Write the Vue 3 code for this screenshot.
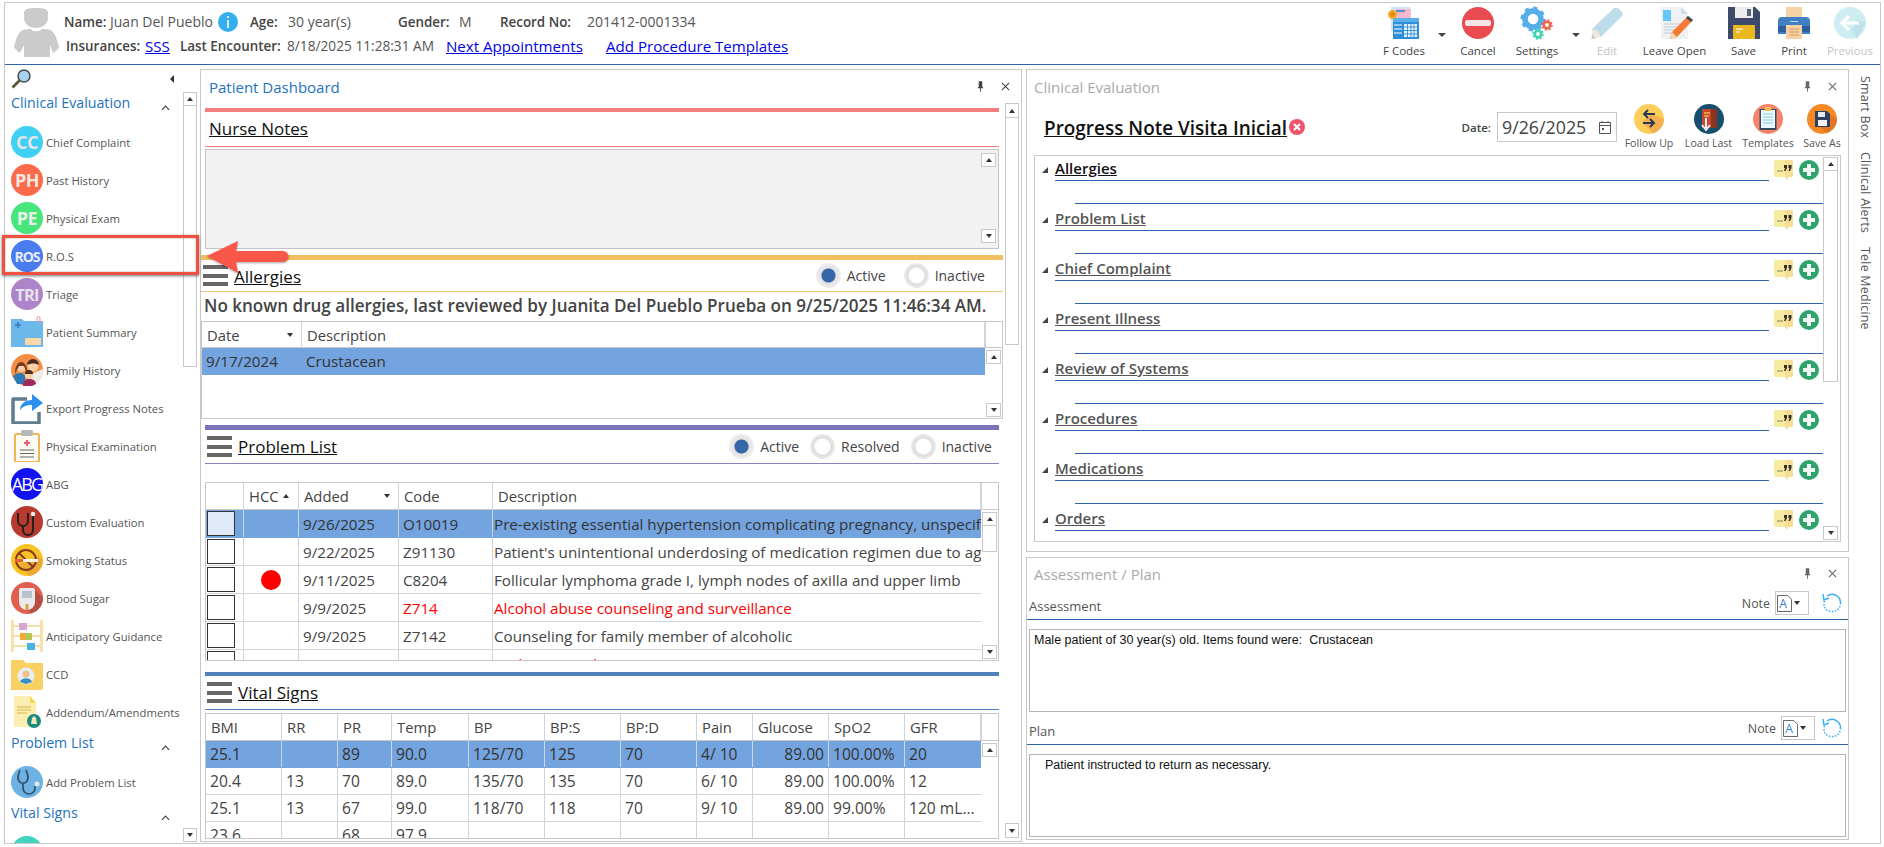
<script setup>
const tools = [
  { k: 'fcodes', label: 'F Codes', w: 60 },
  { k: 'arrow', w: 16 },
  { k: 'cancel', label: 'Cancel', w: 56 },
  { k: 'settings', label: 'Settings', w: 62 },
  { k: 'arrow', w: 16 },
  { k: 'edit', label: 'Edit', w: 46, off: true },
  { k: 'leave', label: 'Leave Open', w: 89 },
  { k: 'save', label: 'Save', w: 49 },
  { k: 'print', label: 'Print', w: 52 },
  { k: 'prev', label: 'Previous', w: 60, off: true },
]
const clinicalItems = [
  { label: 'Chief Complaint', text: 'CC', color: '#3fd0f6', cls: 'f15', ink: '#e6e6e6' },
  { label: 'Past History', text: 'PH', color: '#fb6a4a', cls: 'f15', ink: '#f3e6e0' },
  { label: 'Physical Exam', text: 'PE', color: '#46e67c', cls: 'f15', ink: '#e8f0e8' },
  { label: 'R.O.S', text: 'ROS', color: '#4a7cf0', cls: 'f12', ink: '#e8ecf4' },
  { label: 'Triage', text: 'TRI', color: '#ad84c9', cls: 'f14', ink: '#e8e2ee' },
  { label: 'Patient Summary', k: 'folder' },
  { label: 'Family History', k: 'family' },
  { label: 'Export Progress Notes', k: 'export' },
  { label: 'Physical Examination', k: 'clip' },
  { label: 'ABG', text: 'ABG', color: '#1212f5', cls: 'f16n', ink: '#fff' },
  { label: 'Custom Evaluation', k: 'steth' },
  { label: 'Smoking Status', k: 'smoke' },
  { label: 'Blood Sugar', k: 'sugar' },
  { label: 'Anticipatory Guidance', k: 'abacus' },
  { label: 'CCD', k: 'ccd' },
  { label: 'Addendum/Amendments', k: 'addendum' },
]
const problems = [
  { added: '9/26/2025', code: 'O10019', desc: 'Pre-existing essential hypertension complicating pregnancy, unspecified trimester', sel: true },
  { added: '9/22/2025', code: 'Z91130', desc: "Patient's unintentional underdosing of medication regimen due to age-related debility" },
  { added: '9/11/2025', code: 'C8204', desc: 'Follicular lymphoma grade I, lymph nodes of axilla and upper limb', hcc: true },
  { added: '9/9/2025', code: 'Z714', desc: 'Alcohol abuse counseling and surveillance', red: true },
  { added: '9/9/2025', code: 'Z7142', desc: 'Counseling for family member of alcoholic' },
  { added: '9/9/2025', code: 'Z68', desc: 'Body mass index [BMI]', red: true },
]
const vitalHead = ['BMI', 'RR', 'PR', 'Temp', 'BP', 'BP:S', 'BP:D', 'Pain', 'Glucose', 'SpO2', 'GFR']
const vitals = [
  { sel: true, c: ['25.1', '', '89', '90.0', '125/70', '125', '70', '4/ 10', '89.00', '100.00%', '20'] },
  { c: ['20.4', '13', '70', '89.0', '135/70', '135', '70', '6/ 10', '89.00', '100.00%', '12'] },
  { c: ['25.1', '13', '67', '99.0', '118/70', '118', '70', '9/ 10', '89.00', '99.00%', '120 mL...'] },
  { c: ['23.6', '', '68', '97.9', '', '', '', '', '', '', ''] },
]
const noteActions = [
  { k: 'follow', label: 'Follow Up', w: 60 },
  { k: 'load', label: 'Load Last', w: 59 },
  { k: 'templates', label: 'Templates', w: 60 },
  { k: 'saveas', label: 'Save As', w: 48 },
]
const sections = ['Allergies', 'Problem List', 'Chief Complaint', 'Present Illness', 'Review of Systems', 'Procedures', 'Medications', 'Orders']
const assessmentText = 'Male patient of 30 year(s) old. Items found were:  Crustacean'
</script>

<template>
  <div class="frame">
    <header class="top">
      <svg class="avatar" viewBox="0 0 45 50">
        <path d="M10 6c0-4 4-5 12-5s12 1 12 5v5c0 5-5 10-12 10S10 16 10 11z" fill="#cbcbcb" />
        <path d="M9 23c3-1 6-1 8-1 1 3 9 3 11 0 3 0 6 0 8 1 4 1 7 8 9 17-1 2-3 4-6 6l-3-8v12H10V38l-4 8c-3-2-5-4-6-6 2-9 5-16 9-17z" fill="#cbcbcb" />
      </svg>
      <div class="info">
        <div class="info-row r1">
          <b>Name:</b><span>Juan Del Pueblo</span>
          <svg class="info-i" viewBox="0 0 20 20"><circle cx="10" cy="10" r="10" fill="#35aef0" /><rect x="9" y="8" width="2" height="8" fill="#d8f0fc" /><rect x="9" y="4" width="2" height="2" fill="#d8f0fc" /></svg>
          <b>Age:</b><span>30 year(s)</span>
          <b>Gender:</b><span>M</span>
          <b>Record No:</b><span>201412-0001334</span>
        </div>
        <div class="info-row r2">
          <b>Insurances:</b><a>SSS</a>
          <b>Last Encounter:</b><span>8/18/2025 11:28:31 AM</span>
          <a>Next Appointments</a><a>Add Procedure Templates</a>
        </div>
      </div>
      <div class="toolbar">
        <div v-for="(t, i) in tools" :key="i" class="tool" :class="{ off: t.off }" :style="{ width: t.w + 'px' }">
          <i v-if="t.k === 'arrow'" class="drop"></i>
          <template v-else>
            <svg class="tool-ic" viewBox="0 0 32 32">
              <template v-if="t.k === 'fcodes'">
                <path d="M3 0h19v6H8v18H3z" fill="#cfe3f8" />
                <rect x="8" y="2" width="15" height="9" fill="#f6b9cc" />
                <rect x="8" y="3" width="9" height="2" fill="#5b8fc9" />
                <rect x="5" y="11" width="26" height="21" fill="#2f8fd8" />
                <rect x="5" y="11" width="26" height="4" fill="#58b2e8" />
                <path d="M16 17h13v13H16z" fill="#e8f3fb" />
                <path d="M16 20h13M16 23.5h13M16 27h13M19.5 17v13M23 17v13M26 17v13" stroke="#2f8fd8" stroke-width=".9" />
                <path d="M6 18h8M6 22h8M6 26h8" stroke="#bcdcf4" stroke-width="1.4" />
                <circle cx="4.5" cy="7.5" r="4.5" fill="#f6a623" /><circle cx="4.5" cy="7.5" r="2.3" fill="#e28a10" />
              </template>
              <template v-else-if="t.k === 'cancel'">
                <circle cx="16" cy="16" r="16" fill="#ea4b50" /><rect x="3" y="13" width="26" height="6" rx="2" fill="#f4e6e6" />
              </template>
              <template v-else-if="t.k === 'settings'">
                <circle cx="12" cy="12" r="8" fill="none" stroke="#55aee8" stroke-width="5.5" />
                <circle cx="12" cy="12" r="11" fill="none" stroke="#55aee8" stroke-width="3" stroke-dasharray="4.2 4.4" />
                <circle cx="26" cy="18" r="3.2" fill="none" stroke="#f0654f" stroke-width="2.6" />
                <circle cx="26" cy="18" r="5" fill="none" stroke="#f0654f" stroke-width="1.6" stroke-dasharray="2 1.9" />
                <circle cx="17" cy="27" r="3.2" fill="none" stroke="#3fd2b4" stroke-width="2.6" />
                <circle cx="17" cy="27" r="5" fill="none" stroke="#3fd2b4" stroke-width="1.6" stroke-dasharray="2 1.9" />
              </template>
              <template v-else-if="t.k === 'edit'">
                <path d="M27 1l5 5-1 3L10 30l-8-1-1-7L23 1z" fill="#bcdcea" />
                <path d="M1 22l1 9 8-1-3-6z" fill="#f0e6dc" /><path d="M1 27l-.5 5 4.5-.5z" fill="#c8c8c8" />
              </template>
              <template v-else-if="t.k === 'leave'">
                <path d="M2 0h20l7 7v25H2z" fill="#f0f1f3" /><path d="M22 0l7 7h-7z" fill="#d5dbe3" />
                <rect x="4" y="3" width="8" height="11" fill="#63c6f6" />
                <path d="M5 17h15M5 20h13M5 23h11M5 26h9" stroke="#cfd8e2" stroke-width="1.3" />
                <path d="M29 9l5 4-16 17-7 2 2-7z" fill="#f47a32" /><path d="M29 9l5 4-2 2-5-4z" fill="#3c4a5c" /><path d="M11 32l2-7 5 5z" fill="#f6d7a8" />
              </template>
              <template v-else-if="t.k === 'save'">
                <path d="M0 0h27l5 5v27H0z" fill="#3d4a6b" /><rect x="7" y="0" width="18" height="11" fill="#ececec" /><rect x="19" y="2" width="4" height="7" fill="#5a6478" />
                <rect x="5" y="18" width="22" height="14" fill="#eab71e" /><path d="M8 22h7M8 25h4" stroke="#f9eec4" stroke-width="1.5" />
              </template>
              <template v-else-if="t.k === 'print'">
                <rect x="8" y="0" width="16" height="11" fill="#f7d2a4" /><path d="M0 14a4 4 0 0 1 4-4h24a4 4 0 0 1 4 4v13H0z" fill="#3f7fc2" /><rect x="0" y="19" width="32" height="6" fill="#2d5f9c" />
                <rect x="8" y="18" width="16" height="14" fill="#f7d2a4" /><path d="M11 22h10M11 25h10M11 28h10" stroke="#d69a5c" stroke-width="1" />
                <rect x="12" y="14" width="8" height="1" fill="#bcd8f2" />
              </template>
              <template v-else>
                <circle cx="16" cy="16" r="16" fill="#cdedf2" /><path d="M17 24l6 8 9-16-9-4z" fill="#bfe3ea" /><path d="M8 16h17M15 9l-7 7 7 7" fill="none" stroke="#fff" stroke-width="3.2" />
              </template>
            </svg>
            <span class="tool-lb">{{ t.label }}</span>
          </template>
        </div>
      </div>
    </header>

    <div class="body">
      <aside class="side">
        <div class="side-list">
          <div class="side-top">
            <svg class="lens" viewBox="0 0 20 20"><circle cx="13" cy="7" r="6" fill="#a8d2f4" stroke="#4a4a4a" stroke-width="1.5" /><path d="M8.5 11.5L1.5 18.5" stroke="#5a5a3a" stroke-width="2.8" /></svg>
            <i class="collapse"></i>
          </div>
          <div class="side-h">Clinical Evaluation<svg class="chev" viewBox="0 0 10 6"><path d="M1 5l4-4 4 4" fill="none" stroke="#444" stroke-width="1.3" /></svg></div>
          <div v-for="it in clinicalItems" :key="it.label" class="side-item">
            <span v-if="it.text" class="disc" :class="it.cls" :style="{ background: it.color, color: it.ink }">{{ it.text }}</span>
            <svg v-else class="side-ic" viewBox="0 0 32 32">
              <template v-if="it.k === 'folder'">
                <path d="M0 3h11l2 2h19v26H0z" fill="#6cb8ea" /><rect x="14" y="22" width="16" height="7" fill="#f9d8a8" /><path d="M4 9h6M7 6v6" stroke="#2b79c2" stroke-width="1.5" /><path d="M26 6V2a1.5 1.5 0 0 1 3 0v6" fill="none" stroke="#ef8f8f" stroke-width="1" />
              </template>
              <template v-else-if="it.k === 'family'">
                <circle cx="16" cy="16" r="16" fill="#f68f45" /><path d="M16 32A16 16 0 0 0 32 16V15L20 20z" fill="#f0ece6" />
                <circle cx="22" cy="12" r="5.5" fill="#f9cfa6" /><path d="M16 11a6 6 0 0 1 12 0c-3-2-8-2-12 0z" fill="#4a2c20" />
                <circle cx="10" cy="13" r="5" fill="#f9cfa6" /><path d="M4 20c0-9 3-12 6-12s7 3 6 12l-3-8H8z" fill="#7a3a20" />
                <path d="M2 22c4-4 10-4 12 0v8H6z" fill="#2a7ab8" /><circle cx="18" cy="21" r="4" fill="#f9cfa6" /><path d="M14 20a4 4 0 0 1 8 0z" fill="#4a2c20" /><path d="M12 32c0-6 3-7 6-7s7 1 7 5l-4 2z" fill="#a02a5c" />
              </template>
              <template v-else-if="it.k === 'export'">
                <path d="M16 7H2v24h26V20" fill="none" stroke="#5e7e90" stroke-width="3.5" stroke-linejoin="round" />
                <path d="M9 18c0-6 5-10 12-10V2l11 9-11 8v-6c-5 0-9 1-12 5z" fill="#2b90ee" />
              </template>
              <template v-else-if="it.k === 'clip'">
                <rect x="4" y="4" width="24" height="28" rx="1.5" fill="#fbfbf4" stroke="#f2b455" stroke-width="2" />
                <rect x="10" y="0" width="12" height="6" rx="2" fill="#b8b8b8" /><path d="M16 10v6M13 13h6" stroke="#ef5e68" stroke-width="2" /><path d="M9 20h14M9 23.5h14M9 27h14" stroke="#666" stroke-width="1" />
              </template>
              <template v-else-if="it.k === 'steth'">
                <circle cx="16" cy="16" r="16" fill="#b83a2e" />
                <path d="M7 7v8a5 5 0 0 0 10 0V7M12 20v4a5 5 0 0 0 10 0V10" fill="none" stroke="#23201e" stroke-width="2" /><circle cx="22" cy="8" r="2.2" fill="#eee" />
              </template>
              <template v-else-if="it.k === 'smoke'">
                <circle cx="16" cy="16" r="16" fill="#f8c326" /><path d="M32 16A16 16 0 0 1 18 32L9 20l18-8z" fill="#eda936" />
                <circle cx="15" cy="16" r="10" fill="none" stroke="#8a3a1e" stroke-width="2" /><path d="M8 9l14 14" stroke="#8a3a1e" stroke-width="2" />
                <rect x="4" y="15" width="8" height="3" fill="#e8603a" /><rect x="12" y="15" width="15" height="3" fill="#fbf3e2" />
              </template>
              <template v-else-if="it.k === 'sugar'">
                <circle cx="16" cy="16" r="16" fill="#e25f50" /><path d="M32 16A16 16 0 0 1 20 31.5L12 22l12-14z" fill="#b84f44" />
                <path d="M10 6h12a2 2 0 0 1 2 2v12a8 8 0 0 1-16 0V8a2 2 0 0 1 2-2z" fill="#e8eaee" /><rect x="11" y="9" width="10" height="7" fill="#b8c2ce" /><rect x="14.5" y="22" width="3" height="6" fill="#d9a53a" />
              </template>
              <template v-else-if="it.k === 'abacus'">
                <rect x="0" y="0" width="3" height="32" rx="1" fill="#f9dfa8" /><rect x="29" y="0" width="3" height="32" rx="1" fill="#f9dfa8" />
                <path d="M3 6h26M3 16h26M3 26h26" stroke="#f4d490" stroke-width="1.5" />
                <rect x="8" y="3" width="8" height="7" fill="#d8a6d6" /><rect x="9" y="13" width="12" height="7" fill="#f7a83a" /><rect x="15" y="13" width="5" height="7" fill="#9ccf5e" /><rect x="16" y="23" width="8" height="7" fill="#45b6e6" />
              </template>
              <template v-else-if="it.k === 'ccd'">
                <path d="M0 2h12l3 3h17v25a2 2 0 0 1-2 2H0z" fill="#f9d163" /><circle cx="15" cy="18" r="8.5" fill="#e8eef4" /><circle cx="15" cy="16" r="3.5" fill="#f2c08e" /><path d="M9 24c1-5 11-5 12 0l-6 2z" fill="#3a8fc0" />
              </template>
              <template v-else-if="it.k === 'addendum'">
                <path d="M3 0h16l6 7v24H3z" fill="#fbeeb0" /><path d="M19 0l6 7h-6z" fill="#f4d650" /><path d="M6 11h14M6 14h14M6 17h10" stroke="#d8b84a" stroke-width="1" />
                <circle cx="23" cy="25" r="7" fill="#1d8a82" /><path d="M20 28l1-6 2-2 2 2 1 6z" fill="#f4e6b8" />
              </template>
            </svg>
            <span class="side-lb">{{ it.label }}</span>
          </div>
          <div class="side-h h2">Problem List<svg class="chev" viewBox="0 0 10 6"><path d="M1 5l4-4 4 4" fill="none" stroke="#444" stroke-width="1.3" /></svg></div>
          <div class="side-item">
            <svg class="side-ic" viewBox="0 0 32 32"><circle cx="16" cy="16" r="16" fill="#6cb2e2" /><path d="M9 4C7 9 6 12 8 15c2 3 6 3 8 0 2-3 1-6-1-11M12 18v4a6 6 0 0 0 12 0v-2" fill="none" stroke="#36506a" stroke-width="1.7" /><circle cx="26" cy="18" r="2.5" fill="#dfe8ee" /></svg>
            <span class="side-lb">Add Problem List</span>
          </div>
          <div class="side-h h2">Vital Signs<svg class="chev" viewBox="0 0 10 6"><path d="M1 5l4-4 4 4" fill="none" stroke="#444" stroke-width="1.3" /></svg></div>
          <div class="side-item"><span class="disc teal"></span></div>
        </div>
        <div class="sb side-sb">
          <span class="sb-btn"><i class="up"></i></span>
          <span class="sb-thumb t-side"></span>
          <span class="sb-gap"></span>
          <span class="sb-btn"><i class="down"></i></span>
        </div>
      </aside>

      <section class="panel dash">
        <div class="ptitle active">
          <span>Patient Dashboard</span>
          <svg class="pin" viewBox="0 0 8 12"><path d="M2 0h4v6l1 1v1H4.5v4h-1V8H1V7l1-1z" fill="#444" /></svg>
          <svg class="x" viewBox="0 0 10 10"><path d="M1 1l8 8M9 1l-8 8" stroke="#444" stroke-width="1.2" /></svg>
        </div>
        <div class="dash-main">
          <div class="dash-content">
            <div class="bar inset c-red"></div>
            <div class="sec-row inset b-red nurse"><span class="sec-t">Nurse Notes</span></div>
            <div class="graybox inset">
              <div class="sb gb-sb">
                <span class="sb-btn"><i class="up"></i></span>
                <span class="sb-gap"></span>
                <span class="sb-btn"><i class="down"></i></span>
              </div>
            </div>
            <div class="bar c-yellow m6"></div>
            <div class="sec-row b-yellow h32">
              <span class="burger"><i></i><i></i><i></i></span>
              <span class="sec-t low">Allergies</span>
              <div class="radios r-all">
                <label class="radio on"><i></i>Active</label>
                <label class="radio"><i></i>Inactive</label>
              </div>
            </div>
            <div class="notice">No known drug allergies, last reviewed by Juanita Del Pueblo Prueba on 9/25/2025 11:46:34 AM.</div>
            <div class="grid g-all">
              <div class="ghead cols-all">
                <div class="gc sorted">Date<i class="down"></i></div>
                <div class="gc">Description</div>
                <div class="gc last"></div>
              </div>
              <div class="gbody">
                <div class="grows">
                  <div class="grow cols-all2 sel"><div class="gc">9/17/2024</div><div class="gc">Crustacean</div></div>
                </div>
                <div class="sb g-sb">
                  <span class="sb-btn"><i class="up"></i></span>
                  <span class="sb-gap"></span>
                  <span class="sb-btn"><i class="down"></i></span>
                </div>
              </div>
            </div>

            <div class="bar inset c-purple m6"></div>
            <div class="sec-row inset b-purple h34">
              <span class="burger"><i></i><i></i><i></i></span>
              <span class="sec-t">Problem List</span>
              <div class="radios r-prob">
                <label class="radio on"><i></i>Active</label>
                <label class="radio"><i></i>Resolved</label>
                <label class="radio"><i></i>Inactive</label>
              </div>
            </div>
            <div class="grid inset g-prob">
              <div class="ghead cols-prob">
                <div class="gc"></div>
                <div class="gc sorted hcc">HCC<i class="up"></i></div>
                <div class="gc sorted">Added<i class="down"></i></div>
                <div class="gc">Code</div>
                <div class="gc">Description</div>
                <div class="gc last"></div>
              </div>
              <div class="gbody">
                <div class="grows">
                  <div v-for="p in problems" :key="p.code" class="grow cols-prob2 r28" :class="{ sel: p.sel }">
                    <div class="gc chk"><span class="box"></span></div>
                    <div class="gc dotc"><span v-if="p.hcc" class="dot"></span></div>
                    <div class="gc">{{ p.added }}</div>
                    <div class="gc" :class="{ red: p.red }">{{ p.code }}</div>
                    <div class="gc desc" :class="{ red: p.red }">{{ p.desc }}</div>
                  </div>
                </div>
                <div class="sb g-sb">
                  <span class="sb-btn"><i class="up"></i></span>
                  <span class="sb-thumb t-prob"></span>
                  <span class="sb-gap"></span>
                  <span class="sb-btn"><i class="down"></i></span>
                </div>
              </div>
            </div>

            <div class="bar inset c-blue m11"></div>
            <div class="sec-row inset b-blue h34">
              <span class="burger"><i></i><i></i><i></i></span>
              <span class="sec-t">Vital Signs</span>
            </div>
            <div class="grid inset g-vit">
              <div class="ghead cols-vit">
                <div v-for="h in vitalHead" :key="h" class="gc">{{ h }}</div>
                <div class="gc last"></div>
              </div>
              <div class="gbody">
                <div class="grows">
                  <div v-for="(v, i) in vitals" :key="i" class="grow cols-vit2" :class="{ sel: v.sel }">
                    <div v-for="(c, j) in v.c" :key="j" class="gc" :class="{ num: j === 8 }">{{ c }}</div>
                  </div>
                </div>
                <div class="sb g-sb">
                  <span class="sb-btn"><i class="up"></i></span>
                  <span class="sb-gap"></span>
                </div>
              </div>
            </div>
          </div>
          <div class="sb dash-sb">
            <span class="sb-btn tall"><i class="up"></i></span>
            <span class="sb-thumb t-dash"></span>
            <span class="sb-gap"></span>
            <span class="sb-btn tall"><i class="down"></i></span>
          </div>
        </div>
      </section>

      <div class="rightcol">
        <section class="panel clin">
          <div class="ptitle h34t">
            <span>Clinical Evaluation</span>
            <svg class="pin" viewBox="0 0 8 12"><path d="M2 0h4v6l1 1v1H4.5v4h-1V8H1V7l1-1z" fill="#666" /></svg>
            <svg class="x" viewBox="0 0 10 10"><path d="M1 1l8 8M9 1l-8 8" stroke="#666" stroke-width="1.2" /></svg>
          </div>
          <div class="note-head">
            <span class="note-t">Progress Note Visita Inicial</span>
            <svg class="note-x" viewBox="0 0 16 16"><circle cx="8" cy="8" r="8" fill="#f0546c" /><path d="M5 5l6 6M11 5l-6 6" stroke="#fff" stroke-width="2.2" /></svg>
            <b class="date-l">Date:</b>
            <div class="date-box">9/26/2025
              <svg viewBox="0 0 12 14"><path d="M.5 2.5h11v11H.5zM.5 5.5h11M3 1v2M9 1v2" fill="none" stroke="#555" /><rect x="3" y="8" width="2" height="2" fill="#555" /></svg>
            </div>
            <div class="actions">
              <div v-for="a in noteActions" :key="a.k" class="action" :style="{ width: a.w + 'px' }">
                <svg viewBox="0 0 30 30">
                  <template v-if="a.k === 'follow'">
                    <circle cx="15" cy="15" r="15" fill="#fbce5c" /><path d="M30 15a15 15 0 0 1-11 14.5L8 18l10-8z" fill="#f2b04e" />
                    <path d="M21 10H10M14 6l-4 4 4 4" fill="none" stroke="#2b3a52" stroke-width="2" /><path d="M9 19h11M16 15l4 4-4 4" fill="none" stroke="#2b3a52" stroke-width="2" />
                  </template>
                  <template v-else-if="a.k === 'load'">
                    <circle cx="15" cy="15" r="15" fill="#15506f" /><rect x="8" y="5" width="15" height="19" fill="#c8452e" /><rect x="17" y="5" width="6" height="19" fill="#8c3322" /><path d="M10 9h6M10 12h5" stroke="#f4b54a" stroke-width="1.5" />
                    <path d="M12 14v10M8 21l4 5 4-5" fill="none" stroke="#e8f2f8" stroke-width="2" />
                  </template>
                  <template v-else-if="a.k === 'templates'">
                    <circle cx="15" cy="15" r="15" fill="#f9836c" /><rect x="6.5" y="5" width="17" height="21" fill="#3a4a60" /><rect x="8" y="6" width="14" height="18" fill="#e9f6fb" /><rect x="12" y="3" width="6" height="4" fill="#f6c04a" />
                    <path d="M10 10h10M10 13h10M10 16h10M10 19h10" stroke="#8fd0ec" stroke-width="1" />
                  </template>
                  <template v-else>
                    <circle cx="15" cy="15" r="15" fill="#f58a26" /><path d="M30 15a15 15 0 0 1-10 14L9 21 21 9z" fill="#e07624" />
                    <path d="M8 7h12l3 3v13H8z" fill="#2f3f60" /><rect x="11" y="8" width="7" height="5" fill="#e4e8f0" /><rect x="11" y="16" width="9" height="6" fill="#f4f4f8" />
                  </template>
                </svg>
                <span>{{ a.label }}</span>
              </div>
            </div>
          </div>
          <div class="secbox">
            <div class="secs">
              <div v-for="(s, i) in sections" :key="s" class="secrow">
                <div class="sec-line">
                  <i class="tri"></i>
                  <span class="sec-name" :class="{ first: i === 0 }"><u>{{ s }}</u></span>
                  <svg class="chat" viewBox="0 0 19 20"><path d="M2 0h15a2 2 0 0 1 2 2v13a2 2 0 0 1-2 2h-3v3l-3-3H2a2 2 0 0 1-2-2V2a2 2 0 0 1 2-2z" fill="#f6eca0" /><path d="M11 0h6a2 2 0 0 1 2 2v13a2 2 0 0 1-2 2h-3v3l-3-3z" fill="#f7dd96" /><circle cx="4" cy="11" r=".7" fill="#555" /><circle cx="6" cy="11" r=".7" fill="#555" /><circle cx="8" cy="11" r=".7" fill="#555" /><path d="M10 5h3v3l-1.5 3H10l1-3h-1zM14.5 5h3v3L16 11h-1.5l1-3h-1z" fill="#34302c" /></svg>
                  <svg class="plus" viewBox="0 0 20 20"><circle cx="10" cy="10" r="10" fill="#2ea36c" /><path d="M10 4v12M4 10h12" stroke="#f2f7f4" stroke-width="4" /></svg>
                </div>
                <div class="sec-under"></div>
              </div>
            </div>
            <div class="sb sec-sb">
              <span class="sb-btn"><i class="up"></i></span>
              <span class="sb-thumb t-sec"></span>
              <span class="sb-gap"></span>
              <span class="sb-btn"><i class="down"></i></span>
            </div>
          </div>
        </section>

        <section class="panel assess">
          <div class="ptitle h30t">
            <span>Assessment / Plan</span>
            <svg class="pin" viewBox="0 0 8 12"><path d="M2 0h4v6l1 1v1H4.5v4h-1V8H1V7l1-1z" fill="#666" /></svg>
            <svg class="x" viewBox="0 0 10 10"><path d="M1 1l8 8M9 1l-8 8" stroke="#666" stroke-width="1.2" /></svg>
          </div>
          <div class="ap-row a1">
            <span class="ap-l">Assessment</span>
            <span class="ap-note">Note</span>
            <div class="notebox">
              <svg viewBox="0 0 16 18"><path d="M.5.5h11l4 4v13H.5z" fill="#fff" stroke="#5a5a5a" /><text x="2.5" y="14" font-size="13" fill="#3a7fd0" font-family="Open Sans">A</text></svg>
              <i class="down"></i>
            </div>
            <svg class="reload" viewBox="0 0 20 20"><path d="M5 3a8.5 8.5 0 0 1 13.5 7" fill="none" stroke="#3ab0f0" stroke-width="1.5" /><path d="M18.5 10A8.5 8.5 0 0 1 3 15a8.5 8.5 0 0 1 0-8" fill="none" stroke="#3ab0f0" stroke-width="1.5" stroke-dasharray="1.5 1.5" /><path d="M1 1l1 6 5-2" fill="none" stroke="#3ab0f0" stroke-width="1.5" /></svg>
          </div>
          <div class="ap-text">{{ assessmentText }}</div>
          <div class="ap-row a2">
            <span class="ap-l">Plan</span>
            <span class="ap-note">Note</span>
            <div class="notebox">
              <svg viewBox="0 0 16 18"><path d="M.5.5h11l4 4v13H.5z" fill="#fff" stroke="#5a5a5a" /><text x="2.5" y="14" font-size="13" fill="#3a7fd0" font-family="Open Sans">A</text></svg>
              <i class="down"></i>
            </div>
            <svg class="reload" viewBox="0 0 20 20"><path d="M5 3a8.5 8.5 0 0 1 13.5 7" fill="none" stroke="#3ab0f0" stroke-width="1.5" /><path d="M18.5 10A8.5 8.5 0 0 1 3 15a8.5 8.5 0 0 1 0-8" fill="none" stroke="#3ab0f0" stroke-width="1.5" stroke-dasharray="1.5 1.5" /><path d="M1 1l1 6 5-2" fill="none" stroke="#3ab0f0" stroke-width="1.5" /></svg>
          </div>
          <div class="ap-text indent">Patient instructed to return as necessary.</div>
        </section>
      </div>

      <nav class="tabs">
        <span>Smart Box</span>
        <span>Clinical Alerts</span>
        <span>Tele Medicine</span>
      </nav>
    </div>

    <div class="hl"></div>
    <svg class="arrow" viewBox="0 0 84 34">
      <path d="M1 16L32 1l-2 10h47a5.5 5.5 0 0 1 0 11H30l2 11z" fill="#f9574a" />
    </svg>
  </div>
</template>

<style>
html, body { margin: 0; background: #fff; overflow: hidden; }
</style>

<style scoped>
.frame { position: relative; box-sizing: border-box; width: 1877px; height: 842px; margin: 2px 0 0 4px; border: 1px solid #c8c8c8; font-family: "Open Sans", "Noto Sans", sans-serif; color: #444; background: #fff; }
.top { box-sizing: border-box; height: 62px; border-bottom: 1px solid #2f64ac; display: flex; }
.avatar { width: 45px; height: 50px; margin: 4px 5px 0 9px; flex: none; }
.info { padding-top: 6px; font-size: 14px; }
.info-row { display: grid; align-items: center; height: 25px; white-space: nowrap; color: #555; }
.info-row b { font-weight: 600; color: #444; font-size: 13.4px; }
.info-row a { color: #0000e6; text-decoration: underline; font-size: 15.1px; }
.r1 { grid-template-columns: 46px 108px 32px 38px 110px 61px 41px 87px auto; }
.r2 { grid-template-columns: 79px 35px 107px 159px 160px auto; padding-left: 2px; margin-top: -1px; }
.r2 span { font-size: 13.7px; }
.info-i { width: 20px; height: 20px; }
.toolbar { margin-left: auto; display: flex; }
.tool { display: flex; flex-direction: column; align-items: center; position: relative; padding-top: 4px; box-sizing: border-box; color: #444; font-size: 11.5px; }
.tool.off { color: #c4c4c4; }
.tool-ic { width: 32px; height: 32px; flex: none; overflow: visible; }
.tool-lb { margin-top: 4px; white-space: nowrap; line-height: 16px; }
.drop { display: block; margin-top: 26px; width: 0; height: 0; border: 4px solid transparent; border-top: 4px solid #444; border-bottom: 0; }
.body { display: flex; height: 778px; box-sizing: border-box; padding-top: 4px; }

.side { width: 195px; flex: none; display: flex; margin-top: -4px; height: 778px; overflow: hidden; }
.side-list { width: 178px; flex: none; }
.side-top { height: 27px; display: flex; align-items: flex-start; }
.lens { width: 20px; height: 20px; margin: 4px 0 0 6px; }
.collapse { margin: 10px 0 0 auto; width: 0; height: 0; border: 4px solid transparent; border-right: 4px solid #333; border-left: 0; transform: translateX(-9px); }
.side-h { position: relative; height: 22px; line-height: 22px; padding-left: 6px; margin-bottom: 9px; font-size: 14.2px; color: #2472c0; }
.side-h.h2 { margin-top: 1px; }
.chev { position: absolute; left: 156px; top: 13px; width: 9px; height: 6px; }
.side-item { height: 38px; display: flex; align-items: center; padding-left: 6px; }
.disc { width: 32px; height: 32px; border-radius: 50%; flex: none; display: flex; align-items: center; justify-content: center; font-weight: 700; overflow: hidden; }
.teal { background: #40d4c0; }
.f15 { font-size: 18px; letter-spacing: -.5px; }
.f14 { font-size: 16.5px; letter-spacing: -.8px; }
.f12 { font-size: 14px; letter-spacing: -1px; }
.f16n { font-size: 18px; font-weight: 400; letter-spacing: -1.8px; }
.side-ic { width: 32px; height: 32px; flex: none; }
.side-lb { margin-left: 3px; font-size: 11.3px; color: #555; white-space: nowrap; }
.sb { display: flex; flex-direction: column; flex: none; }
.sb-btn { flex: none; height: 14px; box-sizing: border-box; border: 1px solid #c8c8c8; display: flex; align-items: center; justify-content: center; background: #fff; }
.sb-btn.tall { height: 15px; }
.sb-thumb { flex: none; box-sizing: border-box; border: 1px solid #c8c8c8; border-top: 0; }
.sb-gap { flex: 1; }
i.up { display: block; width: 0; height: 0; border: 3.5px solid transparent; border-bottom: 4px solid #333; border-top: 0; }
i.down { display: block; width: 0; height: 0; border: 3.5px solid transparent; border-top: 4px solid #333; border-bottom: 0; }
.side-sb { width: 14px; margin: 27px 0 1px 0; }
.t-side { height: 261px; }

.panel { box-sizing: border-box; border: 1px solid #c8c8c8; background: #fff; }
.dash { width: 822px; height: 773px; flex: none; display: flex; flex-direction: column; }
.ptitle { flex: none; box-sizing: border-box; height: 36px; display: flex; align-items: center; padding-left: 7px; padding-bottom: 2px; font-size: 15px; color: #aaa; }
.ptitle.active { color: #2472c0; padding-left: 8px; }
.ptitle.h34t { height: 34px; padding-bottom: 0; }
.ptitle.h30t { height: 30px; padding-bottom: 0; padding-top: 2px; }
.pin { width: 7px; height: 11px; margin-left: auto; margin-top: -2px; }
.x { width: 9px; height: 9px; margin: -2px 11px 0 17px; }
.dash-main { display: flex; flex: 1; min-height: 0; }
.dash-content { width: 802px; flex: none; display: flex; flex-direction: column; }
.dash-sb { width: 14px; margin: -3px 0 3px 2px; }
.t-dash { height: 227px; }
.inset { margin-left: 4px; margin-right: 4px; }
.bar { flex: none; }
.c-red { height: 4px; margin-top: 2px; background: #f47f7f; }
.c-yellow { height: 5px; background: #f0c060; }
.c-purple { height: 5px; background: #7a74b8; }
.c-blue { height: 4px; background: #4f81bd; }
.m6 { margin-top: 6px; }
.m11 { margin-top: 11px; }
.sec-row { flex: none; display: flex; align-items: center; box-sizing: border-box; border-bottom: 1px solid; padding-left: 2px; }
.nurse { height: 35px; padding-left: 4px; padding-bottom: 2px; }
.h32 { height: 32px; }
.h34 { height: 34px; }
.b-red { border-color: #f47f7f; }
.b-yellow { border-color: #ecc777; }
.b-purple { border-color: #8583c4; }
.b-blue { border-color: #4f81bd; }
.sec-t { font-size: 17px; color: #111; text-decoration: underline; white-space: nowrap; }
.sec-t.low { margin-top: 2px; }
.burger { width: 25px; height: 21px; display: flex; flex-direction: column; justify-content: space-between; margin-right: 6px; flex: none; }
.burger i { display: block; height: 4px; background: #666; }
.graybox { flex: none; box-sizing: border-box; margin-top: 2px; height: 100px; background: #f2f2f2; border: 1px solid #c4c4c4; display: flex; justify-content: flex-end; }
.gb-sb { width: 15px; margin: 3px 2px 5px 0; }
.radios { margin-left: auto; display: flex; font-size: 14px; line-height: 18px; color: #444; }
.r-all { gap: 18px; padding-right: 18px; }
.r-prob { gap: 11px; padding-right: 7px; }
.radio { display: flex; align-items: center; gap: 6px; }
.radio i { width: 25px; height: 25px; border-radius: 50%; flex: none; background: radial-gradient(circle, #fff 0 7px, #dcdcdc 9px, #eee 12.5px); }
.radio.on i { background: radial-gradient(circle, #3566a8 0 6.5px, #e2e2e2 7.5px, #eee 12.5px); }
.notice { flex: none; height: 29px; line-height: 27px; padding-left: 3px; font-size: 17.08px; font-weight: 600; color: #444; white-space: nowrap; overflow: hidden; }
.grid { flex: none; box-sizing: border-box; border: 1px solid #c8c8c8; display: flex; flex-direction: column; overflow: hidden; font-size: 15.2px; color: #444; }
.g-all { height: 98px; }
.g-prob { height: 179px; margin-top: 18px; }
.g-vit { height: 126px; margin-top: 3px; font-size: 15.6px; }
.ghead { flex: none; display: grid; height: 26px; box-sizing: border-box; border-bottom: 1px solid #c8c8c8; font-size: 14.8px; }
.g-prob .ghead, .g-vit .ghead { height: 27px; }
.gc { box-sizing: border-box; border-right: 1px solid #d0d5dc; padding: 0 4px; display: flex; align-items: center; white-space: nowrap; overflow: hidden; min-width: 0; }
.gc.last { border-right: 0; border-left: 1px solid #d0d5dc; }
.ghead .gc { padding-left: 5px; }
.sorted { justify-content: space-between; }
.sorted i { flex: none; margin-right: 4px; }
.hcc { justify-content: flex-start; gap: 4px; }
.gbody { flex: 1; min-height: 0; display: flex; }
.grows { flex: 1; min-width: 0; overflow: hidden; }
.grow { display: grid; height: 27px; box-sizing: border-box; border-bottom: 1px solid #d0d5dc; }
.r28 { height: 28px; }
.cols-all { grid-template-columns: 100px 683px 1fr; }
.cols-all2 { grid-template-columns: 100px 1fr; }
.cols-all2 .gc { border-right: 0; }
.cols-prob { grid-template-columns: 38px 55px 100px 94px 488px 1fr; }
.cols-prob2 { grid-template-columns: 38px 55px 100px 94px 488px; }
.cols-prob2 .gc:last-child { border-right: 0; }
.cols-vit { grid-template-columns: 76px 56px 54px 77px 76px 76px 76px 56px 76px 76px 76px 1fr; }
.cols-vit2 { grid-template-columns: 76px 56px 54px 77px 76px 76px 76px 56px 76px 76px 76px; }
.cols-vit2 .gc:last-child { border-right: 0; }
.grow.sel { background: #74a4e0; border-bottom-color: #74a4e0; }
.grow.sel .gc { color: #333; }
.gc.red { color: #f00; }
.grow .gc.desc { padding-left: 1px; }
.gc.num { justify-content: flex-end; }
.chk { padding: 0 1px; }
.box { display: block; width: 28px; height: 25px; box-sizing: border-box; border: 1px solid #333; background: #fff; }
.sel .box { background: #dfe9f7; }
.dotc { justify-content: center; padding: 0; }
.dot { width: 20px; height: 20px; border-radius: 50%; background: #f00; }
.g-sb { width: 15px; margin: 2px 1px 1px 1px; }
.t-prob { height: 26px; }

.rightcol { width: 823px; flex: none; margin-left: 4px; display: flex; flex-direction: column; gap: 5px; }
.clin { height: 483px; display: flex; flex-direction: column; }
.assess { height: 283px; display: flex; flex-direction: column; }
.note-head { flex: none; height: 51px; display: flex; align-items: flex-start; padding: 0 2px 0 17px; }
.note-t { font-size: 18.95px; font-weight: 600; color: #111; text-decoration: underline; line-height: 48px; white-space: nowrap; }
.note-x { width: 16px; height: 16px; margin: 15px 0 0 2px; }
.date-l { margin: 15px 0 0 auto; font-size: 11.5px; font-weight: 600; line-height: 18px; color: #444; }
.date-box { box-sizing: border-box; width: 120px; height: 30px; margin: 8px 2px 0 6px; border: 1px solid #c8c8c8; display: flex; align-items: center; justify-content: space-between; padding: 0 5px 0 4px; font-size: 17.8px; color: #444; }
.date-box svg { width: 12px; height: 14px; }
.actions { display: flex; }
.action { display: flex; flex-direction: column; align-items: center; font-size: 10.6px; color: #555; white-space: nowrap; }
.action svg { width: 30px; height: 30px; flex: none; }
.action span { line-height: 14px; margin-top: 2px; }
.secbox { flex: none; box-sizing: border-box; height: 387px; margin: 0 7px; border: 1px solid #c8c8c8; display: flex; overflow: hidden; }
.secs { width: 788px; flex: none; overflow: hidden; }
.secrow { height: 50px; }
.sec-line { display: flex; height: 25px; align-items: flex-start; }
.tri { width: 0; height: 0; flex: none; margin: 11px 7px 0 7px; border-style: solid; border-width: 0 0 6px 6px; border-color: transparent transparent #444 transparent; }
.sec-name { box-sizing: border-box; width: 714px; height: 25px; border-bottom: 1px solid #2f64ac; font-size: 15px; font-weight: 600; color: #555; line-height: 24px; white-space: nowrap; }
.sec-name.first { color: #111; }
.chat { width: 19px; height: 20px; margin: 4px 0 0 5px; flex: none; }
.plus { width: 20px; height: 20px; margin: 4px 0 0 6px; flex: none; }
.sec-under { margin: 22px 0 0 40px; border-top: 1px solid #2f64ac; }
.sec-sb { width: 15px; margin: 1px 0 1px 0; }
.t-sec { height: 211px; }
.ap-row { flex: none; display: flex; box-sizing: border-box; border-bottom: 1px solid #2f64ac; font-size: 12.4px; color: #555; padding: 0 6px 0 2px; }
.a1 { height: 32px; }
.a2 { height: 33px; }
.ap-l { font-size: 13px; }
.a1 .ap-l { line-height: 36px; }
.a2 .ap-l { line-height: 38px; }
.ap-note { margin-left: auto; }
.a1 .ap-note { line-height: 32px; }
.a2 .ap-note { line-height: 34px; }
.notebox { box-sizing: border-box; width: 34px; height: 24px; margin: 3px 0 0 5px; border: 1px solid #c8c8c8; display: flex; align-items: center; padding-left: 1px; gap: 2px; }
.a2 .notebox { margin: 4px 7px 0 5px; }
.notebox svg { width: 15px; height: 17px; }
.reload { width: 20px; height: 20px; margin: 5px 0 0 13px; flex: none; }
.a2 .reload { margin-left: 0; margin-top: 6px; }
.ap-text { flex: none; box-sizing: border-box; height: 83px; margin: 9px 2px 0; border: 1px solid #b4b4b4; padding: 2px 4px; font: 12.5px/16px "Liberation Sans", Arial, sans-serif; color: #111; white-space: pre-wrap; }
.ap-text.indent { padding-left: 15px; }
.tabs { flex: 1; margin-top: -4px; padding: 11px 0 0 8px; display: flex; flex-direction: column; align-items: flex-start; gap: 14px; font-size: 12.5px; color: #555; }
.tabs span { writing-mode: vertical-rl; white-space: nowrap; letter-spacing: .2px; }

.hl { position: absolute; left: -3px; top: 232px; width: 197px; height: 40px; box-sizing: border-box; border: 3px solid #f0503f; box-shadow: 0 1px 3px rgba(0,0,0,.55), inset 0 0 2px rgba(0,0,0,.4); pointer-events: none; }
.arrow { position: absolute; left: 201px; top: 237px; width: 84px; height: 34px; overflow: visible; filter: drop-shadow(0 1px 1px rgba(0,0,0,.35)); }
</style>
